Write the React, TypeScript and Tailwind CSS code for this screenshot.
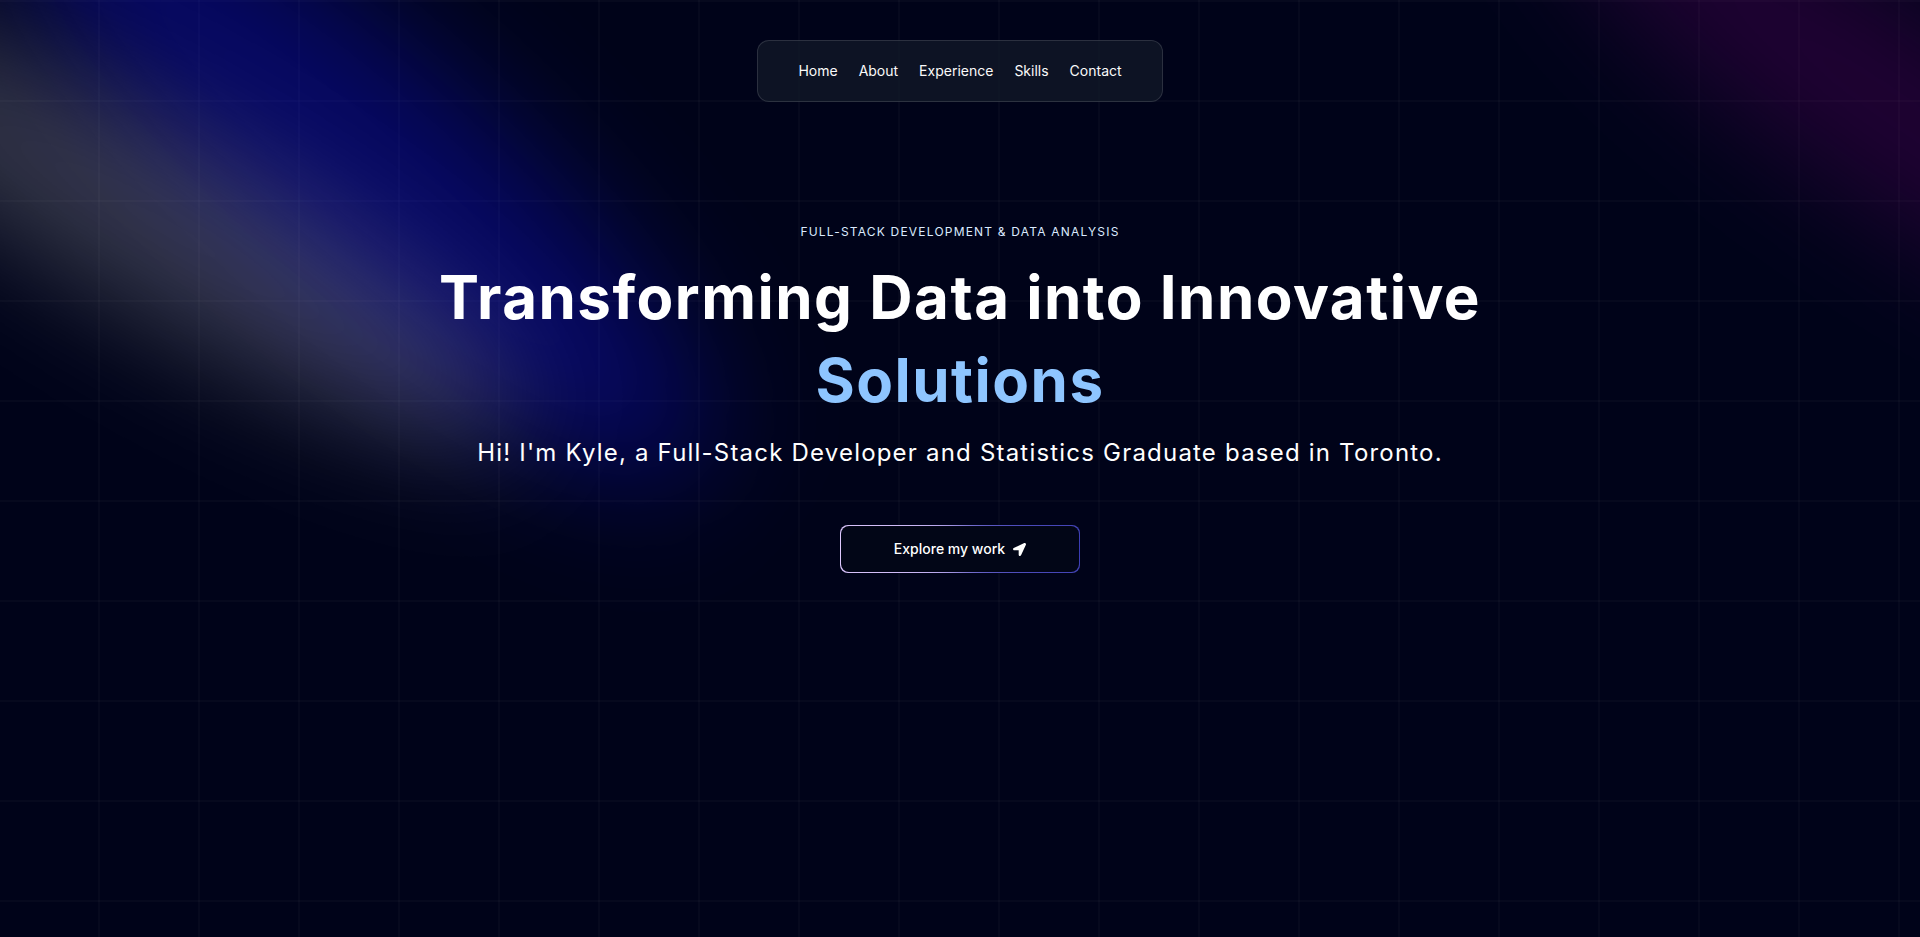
import { FaLocationArrow } from "react-icons/fa";

const navItems = ["Home", "About", "Experience", "Skills", "Contact"];

// soft spotlight beams that sit behind the hero content
function Spotlights() {
  return (
    <div className="pointer-events-none absolute inset-0">
      <div className="absolute left-[-90px] top-[45px] h-[250px] w-[900px] rotate-[41deg] rounded-[50%] bg-[rgba(20,20,255,0.32)] blur-[60px]" />
      <div className="absolute left-[-230px] top-[140px] h-[180px] w-[800px] rotate-[30deg] rounded-[50%] bg-[rgba(255,255,255,0.2)] blur-[55px]" />
      <div className="absolute left-[1480px] top-[10px] h-[190px] w-[820px] rotate-[35deg] rounded-[50%] bg-[rgba(128,0,128,0.24)] blur-[55px]" />
    </div>
  );
}

function MagicButton({ title }: { title: string }) {
  return (
    <button className="relative inline-flex h-12 w-60 overflow-hidden rounded-lg p-px focus:outline-none">
      <span className="absolute inset-0 bg-[conic-gradient(from_270deg_at_50%_50%,#E2CBFF_0%,#393BB2_50%,#E2CBFF_100%)]" />
      <span className="relative inline-flex h-full w-full cursor-pointer items-center justify-center gap-2 rounded-lg bg-[#020617] px-7 text-sm font-medium text-white">
        {title}
        <FaLocationArrow className="h-[13px] w-[13px]" />
      </span>
    </button>
  );
}

export default function App() {
  return (
    <div className="relative h-screen w-full overflow-hidden bg-[#000319] font-['Inter',sans-serif] text-white">
      <div className="absolute inset-0 bg-[linear-gradient(to_right,rgba(255,255,255,0.022)_2px,transparent_2px),linear-gradient(to_bottom,rgba(255,255,255,0.022)_2px,transparent_2px)] [background-position:98px_100px] [background-size:100px_100px]" />
      <Spotlights />

      <div className="relative z-10 flex flex-col items-center">
        <nav className="mt-10 flex items-center justify-center gap-[21px] rounded-xl border border-white/[0.125] bg-[rgba(17,25,40,0.75)] px-10 py-5">
          {navItems.map((item) => (
            <a key={item} className="cursor-pointer text-sm text-neutral-50">
              {item}
            </a>
          ))}
        </nav>

        <p className="mt-[122px] max-w-80 text-center text-xs uppercase tracking-widest text-blue-100">
          Full-Stack Development &amp; Data Analysis
        </p>

        <h1 className="my-4 text-center text-6xl font-bold leading-snug tracking-wide">
          Transforming Data into Innovative
          <br />
          <span className="text-blue-300">Solutions</span>
        </h1>

        <p className="mb-4 text-center text-2xl tracking-wider">
          Hi! I'm Kyle, a Full-Stack Developer and Statistics Graduate based in Toronto.
        </p>

        <div className="mt-10">
          <MagicButton title="Explore my work" />
        </div>
      </div>
    </div>
  );
}
